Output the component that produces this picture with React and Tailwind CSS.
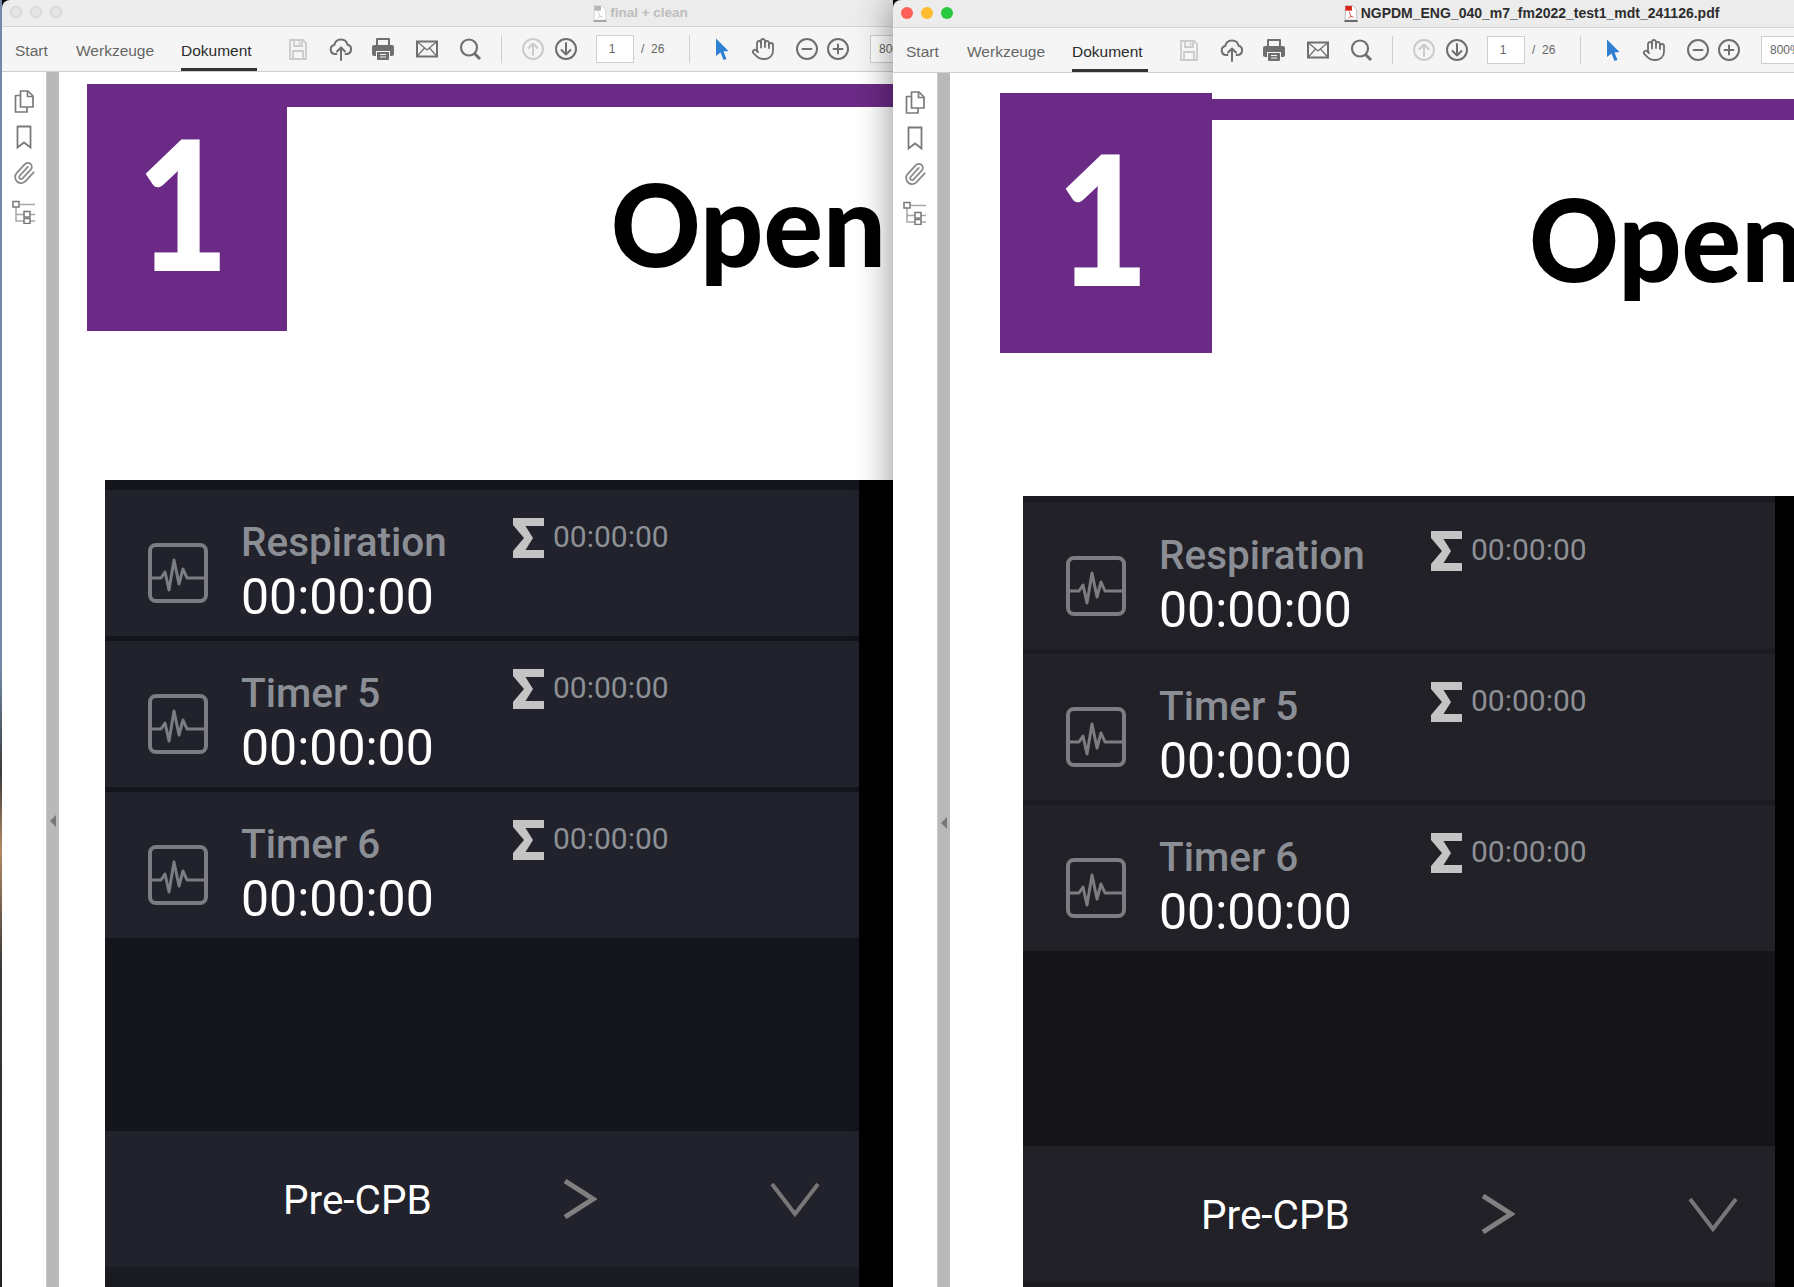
import { Hand, Paperclip } from "lucide-react";

const TIMERS = ["Respiration", "Timer 5", "Timer 6"];

function SaveIcon() {
  return (
    <svg viewBox="0 0 24 24" fill="none" stroke="#cbcbcb" strokeWidth="1.8" className="w-6 h-6 shrink-0">
      <path d="M4 3h13l3 3v16H4z" />
      <path d="M8 3v6h8V3M13.500 4.500v3M7 22v-8h10v8" />
    </svg>
  );
}

function CloudIcon() {
  return (
    <svg viewBox="0 0 24 24" fill="none" stroke="#6f6f6f" strokeWidth="2" strokeLinecap="round" strokeLinejoin="round" className="w-6 h-6 shrink-0">
      <path d="M7.500 17H6a4.500 4.500 0 0 1-.7-8.900 6.800 6.800 0 0 1 13.300-.3A4.700 4.700 0 0 1 18 17h-1.500" />
      <path d="M12 23V11M8 14.500l4-4 4 4" />
    </svg>
  );
}

function PrintIcon() {
  return (
    <svg viewBox="0 0 24 24" className="w-6 h-6 shrink-0" fill="#6f6f6f">
      <path d="M6 1h12a1 1 0 0 1 1 1v6h-2V3H7v5H5V2a1 1 0 0 1 1-1z" />
      <path d="M3 8h18a2 2 0 0 1 2 2v7a2 2 0 0 1-2 2h-2v-5H5v5H3a2 2 0 0 1-2-2v-7a2 2 0 0 1 2-2z" />
      <path fillRule="evenodd" d="M6 15h12v7a1 1 0 0 1-1 1H7a1 1 0 0 1-1-1zM9 17v1h6v-1zM9 19.500v1h6v-1z" />
    </svg>
  );
}

function MailIcon() {
  return (
    <svg viewBox="0 0 24 24" fill="none" stroke="#6f6f6f" className="w-6 h-6 shrink-0">
      <rect x="2" y="4.500" width="20" height="15" strokeWidth="2" />
      <path d="M2 4.500l10 8.500 10-8.500M2 19.500l7.500-8.500M22 19.500L14.500 11" strokeWidth="1.200" />
    </svg>
  );
}

function SearchIcon() {
  return (
    <svg viewBox="0 0 24 24" fill="none" stroke="#6f6f6f" className="w-6 h-6 shrink-0">
      <circle cx="11" cy="10.500" r="8" strokeWidth="2.200" />
      <path d="M16.500 16.500l5.500 5.500" strokeWidth="3" />
    </svg>
  );
}

function ArrowCircle({ up, color }) {
  return (
    <svg viewBox="0 0 24 24" fill="none" stroke={color} strokeWidth="2" strokeLinecap="round" strokeLinejoin="round" className="w-6 h-6 shrink-0">
      <circle cx="12" cy="12" r="10" />
      {up ? <path d="M12 18V6.500M7.500 11L12 6.500l4.500 4.500" /> : <path d="M12 6v11.500M7.500 13l4.500 4.500 4.500-4.500" />}
    </svg>
  );
}

function ZoomCircle({ plus }) {
  return (
    <svg viewBox="0 0 24 24" fill="none" stroke="#6f6f6f" strokeWidth="2" strokeLinecap="round" className="w-6 h-6 shrink-0">
      <circle cx="12" cy="12" r="10" />
      <path d={plus ? "M7.500 12h9M12 7.500v9" : "M7.500 12h9"} />
    </svg>
  );
}

function CursorIcon() {
  return (
    <svg viewBox="0 0 24 24" className="w-6 h-6 shrink-0" fill="#2f7fd3">
      <path d="M6 1.500l12.500 12.500-5 .5 3 7.500-3 1-3-7.500L6 19z" />
    </svg>
  );
}

function PdfIcon({ active }) {
  return (
    <svg viewBox="0 0 14 18" className="w-[14px] h-[17px] shrink-0" fill="none">
      <path d="M1 1h8l4 4v11H1z" fill="#fff" stroke={active ? "#aaa" : "#ccc"} strokeWidth="0.800" />
      <path d="M1 1h7v5H1z" fill={active ? "#d9261c" : "#b5b5b5"} />
      <path d="M5 7l2 5 3 1M7 12l-3 2" stroke={active ? "#d9261c" : "#c0c0c0"} strokeWidth="0.800" />
      <path d="M0 17h14" stroke={active ? "#111" : "#777"} strokeWidth="1.200" />
    </svg>
  );
}

function CopiesIcon() {
  return (
    <svg viewBox="0 0 24 24" fill="none" stroke="#7a7a7a" strokeWidth="1.700" strokeLinejoin="round" className="w-6 h-6">
      <path d="M8.500 2h7.500l5 5v11H8.500z" />
      <path d="M15.500 2v5.500H21M8.500 6.500H3.500V23H15v-5" />
    </svg>
  );
}

function BookmarkIcon() {
  return (
    <svg viewBox="0 0 24 24" fill="none" stroke="#7a7a7a" strokeWidth="1.800" className="w-6 h-6">
      <path d="M5.500 1.500h13v21L12 17.500l-6.500 5z" />
    </svg>
  );
}

function TreeIcon() {
  return (
    <svg viewBox="0 0 24 24" fill="none" className="w-6 h-6">
      <path d="M4 6v15h8M4 14.500h8M8 4.500h15M18 14.500h5M18 21h5" stroke="#a6a6a6" strokeWidth="1.500" />
      <g stroke="#777" strokeWidth="1.500" fill="#fff">
        <rect x="1" y="1.500" width="6" height="5.500" />
        <rect x="12" y="11.500" width="6" height="5.500" />
        <rect x="12" y="18.500" width="6" height="5" />
      </g>
    </svg>
  );
}

function MonitorIcon() {
  return (
    <svg viewBox="0 0 60 60" fill="none" stroke="#7c7d82" className="w-[60px] h-[60px] shrink-0">
      <rect x="2" y="2" width="56" height="56" rx="6" strokeWidth="4" />
      <path d="M3 35h10l4-6 4 18 5-30 5 24 4-15 4 9h19" strokeWidth="3" strokeLinejoin="round" />
    </svg>
  );
}

function SigmaIcon() {
  return (
    <svg viewBox="0 0 31 40" className="w-[31px] h-10 shrink-0" fill="#c4c4c4">
      <path d="M0 0h31v8H12.500L20 20l-7.500 12H31v8H0v-7l11-13L0 7z" />
    </svg>
  );
}

function Toolbar({ zoom }) {
  return (
    <div className="h-[45px] flex items-center pl-[13px] bg-[#f5f5f5] border-b border-[#cfcfcf] text-[15.5px] text-[#666] font-['Liberation_Sans',sans-serif] overflow-hidden">
      <div className="w-[61px] shrink-0 pt-[3px]">Start</div>
      <div className="w-[105px] shrink-0 pt-[3px]">Werkzeuge</div>
      <div className="w-[105px] shrink-0 h-full">
        <div className="w-[76px] h-full flex items-center border-b-[3px] border-[#333] text-[#2c2c2c] pt-[6px]">Dokument</div>
      </div>
      <SaveIcon />
      <div className="ml-[19px] flex"><CloudIcon /></div>
      <div className="ml-[18px] flex"><PrintIcon /></div>
      <div className="ml-[20px] flex"><MailIcon /></div>
      <div className="ml-[19px] flex"><SearchIcon /></div>
      <div className="ml-[19px] w-px h-7 bg-[#cfcfcf] shrink-0" />
      <div className="ml-[19px] flex"><ArrowCircle up color="#cbcbcb" /></div>
      <div className="ml-[9px] flex"><ArrowCircle color="#6f6f6f" /></div>
      <div className="ml-[18px] w-[38px] h-7 shrink-0 bg-white border border-[#cfcfcf] text-xs flex items-center justify-center pr-[6px]">1</div>
      <div className="ml-[7px] w-[25px] shrink-0 text-xs whitespace-nowrap">/&nbsp; 26</div>
      <div className="ml-[23px] w-px h-7 bg-[#cfcfcf] shrink-0" />
      <div className="ml-[20px] flex"><CursorIcon /></div>
      <div className="ml-[17px] flex"><Hand className="w-6 h-6 shrink-0" strokeWidth={1.8} color="#6f6f6f" /></div>
      <div className="ml-[20px] flex"><ZoomCircle /></div>
      <div className="ml-[7px] flex"><ZoomCircle plus /></div>
      <div className="ml-[20px] w-[56px] h-7 shrink-0 bg-white border border-[#cfcfcf] text-xs flex items-center pl-[8px] whitespace-nowrap">{zoom}</div>
    </div>
  );
}

function Sidebar() {
  return (
    <div className="w-[44px] shrink-0 bg-white flex flex-col items-center gap-[12px] pt-[17px]">
      <CopiesIcon />
      <BookmarkIcon />
      <Paperclip className="w-6 h-6 -rotate-[2deg]" strokeWidth={1.8} color="#8a8a8a" />
      <div className="mt-[3px]"><TreeIcon /></div>
    </div>
  );
}

function Splitter({ pad }) {
  return (
    <div className={`w-[13px] shrink-0 bg-[#b9b9b9] border-l border-[#c9c9c9] flex flex-col items-center ${pad}`}>
      <div className="w-0 h-0 border-y-[6px] border-y-transparent border-r-[6px] border-r-[#777]" />
    </div>
  );
}

function TimerRow({ name, rowBg }) {
  return (
    <div className={`h-[146px] flex ${rowBg}`}>
      <div className="ml-[43px] mt-[53px]"><MonitorIcon /></div>
      <div className="ml-[33px] mt-[29px]">
        <div className="text-[40.500px] leading-[47px] text-[#8b8e95] font-medium">{name}</div>
        <div className="text-[50px] leading-[62px] text-white">00:00:00</div>
      </div>
      <div className="absolute ml-[408px] mt-[28px] flex items-start">
        <SigmaIcon />
        <div className="ml-[9px] -mt-px text-[30px] leading-[40px] text-[#8d9095]">00:00:00</div>
      </div>
    </div>
  );
}

function Panel({ className, rowBg, gapBg, emptyBg, bottomBg, width }) {
  return (
    <div className={`bg-black font-['Roboto',sans-serif] ${className}`}>
      <div className={`flex flex-col ${width} ${gapBg}`}>
        {TIMERS.map((name, i) => (
          <div key={name} className={i > 0 ? "mt-[5px]" : ""}>
            <TimerRow name={name} rowBg={rowBg} />
          </div>
        ))}
        <div className={emptyBg} />
        <div className={`h-[136px] flex items-start ${rowBg}`}>
          <div className="ml-[178px] mt-[41px] text-[40.500px] leading-[56px] text-white w-[280px]">Pre-CPB</div>
          <svg viewBox="0 0 34 40" fill="none" stroke="#808080" strokeWidth="5" className="w-[34px] h-10 mt-[48px]">
            <path d="M2 2l28 18L2 38" />
          </svg>
          <svg viewBox="0 0 50 34" fill="none" stroke="#777" strokeWidth="4" className="w-[50px] h-[34px] ml-[173px] mt-[52px]">
            <path d="M2 1l23 30L48 1" />
          </svg>
        </div>
        <div className={`h-[60px] ${bottomBg}`} />
      </div>
    </div>
  );
}

function Header({ square, one, bar, open }) {
  return (
    <div className="flex items-start">
      <div className={`shrink-0 bg-[#6b2a85] flex justify-center text-white font-['Lato',sans-serif] font-black text-[182px] ${square}`}>
        <span className={`inline-block scale-x-[0.88] ${one}`}>1</span>
      </div>
      <div className="flex-1 min-w-0">
        <div className={`bg-[#6b2a85] h-[21px] ${bar}`} />
        <div className={`whitespace-nowrap origin-left scale-x-[0.975] text-black font-['Lato',sans-serif] font-black text-[114px] leading-[140px] ${open}`}>Open</div>
      </div>
    </div>
  );
}

export default function App() {
  return (
    <div className="w-[1794px] h-[1287px] overflow-hidden flex bg-black">
      <div className="w-[2px] shrink-0 bg-[linear-gradient(to_bottom,#6f8aa8_0%,#6f8aa8_52%,#3b3b3b_60%,#b58a63_66%,#3a3a3a_75%,#222_100%)]" />

      {/* background document window */}
      <div className="w-[891px] shrink-0 flex flex-col overflow-hidden rounded-tl-lg">
        <div className="h-[27px] shrink-0 relative flex items-center justify-center bg-[#ececec] border-b border-[#d4d4d4]">
          <div className="absolute left-[8px] top-[6px] flex gap-2">
            <span className="w-3 h-3 rounded-full bg-[#e4e4e4] border border-[#cfcfcf]" />
            <span className="w-3 h-3 rounded-full bg-[#e4e4e4] border border-[#cfcfcf]" />
            <span className="w-3 h-3 rounded-full bg-[#e4e4e4] border border-[#cfcfcf]" />
          </div>
          <div className="flex items-center gap-[3px] ml-[386px] text-[13.500px] font-bold text-[#bdbdbd] font-['Liberation_Sans',sans-serif]">
            <PdfIcon />
            final + clean
          </div>
        </div>
        <Toolbar zoom="800%" />
        <div className="flex-1 flex min-h-0">
          <Sidebar />
          <Splitter pad="pt-[743px]" />
          <div className="flex-1 min-w-0 bg-white overflow-hidden">
            <div className="pl-[28px] pt-[12px]">
              <Header
                square="w-[200px] h-[247px] leading-[234px]"
                one="-ml-[8px]"
                bar="h-[23px]"
                open="pl-[332px] mt-[46px]"
              />
            </div>
            <Panel
              className="ml-[46px] mt-[149px] h-[820px]"
              width="w-[754px]"
              rowBg="bg-[#21222b]"
              gapBg="bg-[#14151b] pt-[10px]"
              emptyBg="h-[193px] bg-[#14151a]"
              bottomBg="bg-[#1a1b20]"
            />
          </div>
        </div>
      </div>

      {/* front window */}
      <div className="flex-1 min-w-0 flex flex-col overflow-hidden rounded-tl-lg relative shadow-[0_0_36px_rgba(0,0,0,0.45)]">
        <div className="h-[28px] shrink-0 relative flex items-center justify-center bg-[#ececec] border-b border-[#d4d4d4]">
          <div className="absolute left-[8px] top-[7px] flex gap-2">
            <span className="w-3 h-3 rounded-full bg-[#ff5f57]" />
            <span className="w-3 h-3 rounded-full bg-[#febc2e]" />
            <span className="w-3 h-3 rounded-full bg-[#28c840]" />
          </div>
          <div className="flex items-center gap-[3px] text-[14px] font-bold text-[#2e2e2e] font-['Liberation_Sans',sans-serif] whitespace-nowrap ml-[376px]">
            <PdfIcon active />
            NGPDM_ENG_040_m7_fm2022_test1_mdt_241126.pdf
          </div>
        </div>
        <Toolbar zoom="800%" />
        <div className="flex-1 flex min-h-0">
          <Sidebar />
          <Splitter pad="pt-[744px]" />
          <div className="flex-1 min-w-0 bg-white overflow-hidden">
            <div className="pl-[50px] pt-[20px]">
              <Header
                square="w-[212px] h-[260px] leading-[246px]"
                one="-ml-[6px]"
                bar="mt-[6px]"
                open="pl-[325px] mt-[48px]"
              />
            </div>
            <Panel
              className="ml-[73px] mt-[143px] h-[820px]"
              width="w-[752px]"
              rowBg="bg-[#212127]"
              gapBg="bg-[#1a1a20] pt-[7px]"
              emptyBg="h-[195px] bg-[#141419]"
              bottomBg="bg-[#1b1b20]"
            />
          </div>
        </div>
      </div>
    </div>
  );
}
